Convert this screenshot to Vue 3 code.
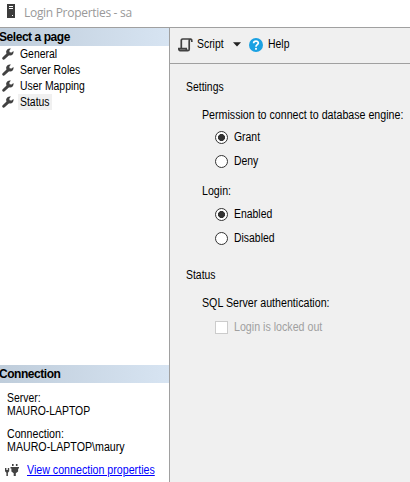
<script setup>
import { ref } from 'vue'

const pages = ['General', 'Server Roles', 'User Mapping', 'Status']
const current = ref('Status')
const permission = ref('Grant')
const login = ref('Enabled')
</script>

<template>
  <div class="window">
    <header class="titlebar">
      <svg class="server-icon" width="8" height="14" viewBox="0 0 8 14">
        <rect width="8" height="14" fill="#3c3c3c" />
        <path d="M2 2.5h4M2 4.5h4" stroke="#fff" />
        <rect x="5" y="11" width="1" height="1" fill="#fff" />
      </svg>
      <span class="title">Login Properties - sa</span>
    </header>
    <div class="body">
      <aside class="side">
        <h2 class="band">Select a page</h2>
        <ul class="pages">
          <li v-for="p in pages" :key="p" @click="current = p">
            <svg width="12" height="12" viewBox="0 0 12 12">
              <path d="M1.7 10.3 6.3 5.9" stroke="#424242" stroke-width="2.9" stroke-linecap="round" />
              <path d="M8.9.6 7.4 2.4l.2 1.9 2 .2 1.8-1.6c.6 2.3-.7 4.6-3.2 4.6-2.7 0-4.4-2-4-4.2C4.7 1.2 6.8 0 8.9.6z" fill="#424242" />
            </svg>
            <span class="page" :class="{ active: current === p }"><span class="t">{{ p }}</span></span>
          </li>
        </ul>
        <h2 class="band">Connection</h2>
        <div class="info">
          <div><span class="t">Server:</span></div>
          <div><span class="t">MAURO-LAPTOP</span></div>
          <div class="conn"><span class="t wide">Connection:</span></div>
          <div><span class="t wide">MAURO-LAPTOP\maury</span></div>
        </div>
        <div class="link-row">
          <svg width="15" height="14" viewBox="0 0 15 14" fill="#424242">
            <path d="M0 4h1.4v2h1.4V4h1.4v3.2L2.9 8.7V12H1.4V8.7L0 7.2zM7 0h1.6v2H7zM10.9 0h1.6v2h-1.6zM5.5 3H14v1.5h-.9v3L10.8 9.2V12H8.7V9.2L6.4 7.5v-3h-.9z" />
          </svg>
          <a class="link t wide">View connection properties</a>
        </div>
      </aside>
      <main class="main">
        <div class="toolbar">
          <svg width="15" height="14" viewBox="0 0 15 14" fill="none" stroke="#424242" stroke-width="1.7">
            <path d="M3.3 10V2.3Q3.3 1 4.7 1H13Q11.2 1.1 11.2 3v8.2q0 1.4-1.5 1.4H2.2Q.8 12.6.8 10.6h7.4q0 2 1.5 2M13 1q1 .5.8 3" />
          </svg>
          <span class="script"><span class="t">Script</span></span>
          <svg class="arrow" width="8" height="5" viewBox="0 0 8 5"><path d="M0 .3h8L4 4.6z" fill="#222" /></svg>
          <svg class="help-icon" width="14" height="14" viewBox="0 0 14 14">
            <circle cx="7" cy="7" r="7" fill="#1ba1e2" />
            <path d="M4.6 5.2C4.7 2.4 9.4 2.5 9.3 5.1 9.2 6.7 7 6.7 7 8.7" fill="none" stroke="#fff" stroke-width="1.7" />
            <rect x="6.1" y="9.9" width="1.8" height="1.8" fill="#fff" />
          </svg>
          <span class="help"><span class="t">Help</span></span>
        </div>
        <div class="form">
          <div class="row"><span class="t">Settings</span></div>
          <div class="row label perm"><span class="t wide">Permission to connect to database engine:</span></div>
          <div v-for="o in ['Grant', 'Deny']" :key="o" class="row option" @click="permission = o">
            <i class="radio" :class="{ on: permission === o }"></i><span class="t">{{ o }}</span>
          </div>
          <div class="row label login"><span class="t wide">Login:</span></div>
          <div v-for="o in ['Enabled', 'Disabled']" :key="o" class="row option" @click="login = o">
            <i class="radio" :class="{ on: login === o }"></i><span class="t">{{ o }}</span>
          </div>
          <div class="row state"><span class="t">Status</span></div>
          <div class="row label auth"><span class="t wide">SQL Server authentication:</span></div>
          <div class="row option locked"><i class="check"></i><span class="t wide">Login is locked out</span></div>
        </div>
      </main>
    </div>
  </div>
</template>

<style>
body { margin: 0; background: #fff; overflow: hidden; }
</style>

<style scoped>
.window {
  width: 410px; height: 482px; box-sizing: border-box; overflow: hidden;
  display: flex; flex-direction: column; background: #fff; color: #000;
  font: 12px/13px "Liberation Sans", Arial, sans-serif; white-space: nowrap;
}
svg { flex: none; }
/* condensed dialog text */
.t { display: inline-block; transform: scaleX(.868); transform-origin: 0 50%; }
.wide { transform: scaleX(.888); }
.titlebar { height: 27px; flex: none; box-sizing: border-box; padding: 4px 0 0 7px; display: flex; align-items: flex-start; gap: 9px; }
.title { font: 12px/17px "Open Sans", sans-serif; color: #999; letter-spacing: -0.3px; }
.body { flex: 1; display: flex; border-top: 1px solid #a0a0a0; min-height: 0; }
.side { width: 169px; flex: none; display: flex; flex-direction: column; }
.band {
  margin: 0; height: 18px; flex: none; font-size: 12px; line-height: 18px; letter-spacing: -0.45px;
  background: linear-gradient(90deg, #bfcddb, #d7e4f2); text-indent: -1px;
}
.pages { list-style: none; margin: 0; padding: 0 0 0 2px; flex: 1; }
.pages li { height: 16px; display: flex; align-items: center; gap: 4px; }
.page { height: 16px; line-height: 16px; padding-left: 2px; }
.page .t { margin-right: -2px; }
.active { background: #f0f0f0; }
.info { height: 81px; flex: none; box-sizing: border-box; padding: 9px 0 0 7px; }
.conn { margin-top: 10px; }
.link-row { height: 18px; flex: none; display: flex; align-items: flex-start; gap: 7px; padding-left: 5px; }
.link { color: #00f; text-decoration: underline; }
.main { flex: 1; min-width: 0; background: #f0f0f0; border-left: 1px solid #a0a0a0; }
.toolbar { height: 33px; padding: 0 0 2px 8px; border-bottom: 1px solid #a0a0a0; display: flex; align-items: center; }
.script { margin-left: 4px; width: 27px; }
.arrow { margin-left: 9px; }
.help-icon { margin-left: 8px; }
.help { margin-left: 5px; }
.form { padding: 16px 0 0 16px; display: flex; flex-direction: column; }
.row { height: 14px; display: flex; align-items: center; }
.label { padding-left: 16px; }
.perm { margin-top: 14px; }
.option { padding-left: 29px; gap: 6px; margin-top: 10px; }
.perm + .option { margin-top: 8px; }
.login { margin-top: 16px; }
.login + .option { margin-top: 9px; }
.state { margin-top: 23px; }
.auth { margin-top: 14px; }
.locked { color: #a0a0a0; }
.radio, .check { width: 13px; height: 13px; box-sizing: border-box; background: #fff; border: 1px solid #333; flex: none; }
.radio { border-radius: 50%; }
.radio.on { background: radial-gradient(circle, #333 0 3.2px, #fff 3.8px); }
.check { border-color: #ccc; }
</style>
